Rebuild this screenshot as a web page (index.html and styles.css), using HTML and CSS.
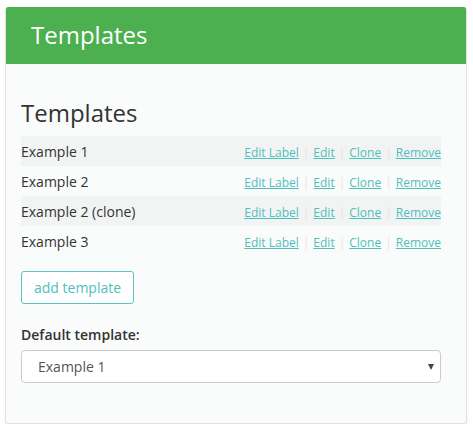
FILE: index.html
```html
<!DOCTYPE html>
<html>
<head>
<meta charset="utf-8">
<link rel="stylesheet" href="styles.css">
</head>
<body>
<div class="panel">
  <div class="panel-heading">Templates</div>
  <div class="panel-body">
    <h3 class="title">Templates</h3>
    <div class="rows">
      <div class="row striped"><span class="name">Example 1</span><span class="actions"><a href="#">Edit Label</a><span class="sep">|</span><a href="#">Edit</a><span class="sep">|</span><a href="#">Clone</a><span class="sep">|</span><a href="#">Remove</a></span></div>
      <div class="row"><span class="name">Example 2</span><span class="actions"><a href="#">Edit Label</a><span class="sep">|</span><a href="#">Edit</a><span class="sep">|</span><a href="#">Clone</a><span class="sep">|</span><a href="#">Remove</a></span></div>
      <div class="row striped"><span class="name">Example 2 (clone)</span><span class="actions"><a href="#">Edit Label</a><span class="sep">|</span><a href="#">Edit</a><span class="sep">|</span><a href="#">Clone</a><span class="sep">|</span><a href="#">Remove</a></span></div>
      <div class="row"><span class="name">Example 3</span><span class="actions"><a href="#">Edit Label</a><span class="sep">|</span><a href="#">Edit</a><span class="sep">|</span><a href="#">Clone</a><span class="sep">|</span><a href="#">Remove</a></span></div>
    </div>
    <button class="btn">add template</button>
    <label class="label">Default template:</label>
    <div class="select-wrap">
      <select class="select"><option>Example 1</option><option>Example 2</option><option>Example 2 (clone)</option><option>Example 3</option></select>
    </div>
  </div>
</div>
</body>
</html>
```
FILE: styles.css
```css
html, body {
  margin: 0;
  padding: 0;
  background: #ffffff;
  font-family: "Open Sans", "Liberation Sans", sans-serif;
  color: #333333;
}
.panel {
  margin: 7px 0 0 5px;
  width: 460px;
  border: 1px solid #dfe3e3;
  border-top: none;
  border-radius: 3px;
  background: #fafbfb;
  box-shadow: 0 1px 2px rgba(0,0,0,0.08);
  overflow: hidden;
}
.panel-heading {
  background: #4caf50;
  color: #ffffff;
  font-size: 24px;
  line-height: 26px;
  padding: 15px 25px 16px;
}
.panel-body {
  padding: 36px 25px 40px 15px;
}
.title {
  margin: 0 0 10px;
  font-size: 24px;
  font-weight: 400;
  line-height: 26px;
  color: #333333;
}
.rows {
  display: flex;
  flex-direction: column;
}
.row {
  display: flex;
  justify-content: space-between;
  align-items: center;
  height: 30px;
  font-size: 14px;
}
.row.striped {
  background: #f2f4f4;
}
.name {
  padding-left: 0;
}
.actions {
  font-size: 12px;
  display: flex;
  align-items: center;
  padding-top: 3px;
}
.actions a {
  color: #4fbfbc;
  text-decoration: underline;
}
.sep {
  color: #e3e6e6;
  margin: 0 4px;
}
.btn {
  margin-top: 15px;
  display: block;
  font-family: inherit;
  font-size: 14px;
  line-height: 19px;
  padding: 6px 12px;
  color: #4fbfbc;
  background: #ffffff;
  border: 1px solid #5cc3c0;
  border-radius: 3px;
}
.label {
  display: block;
  margin-top: 21px;
  margin-bottom: 5px;
  font-size: 14px;
  line-height: 20px;
  font-weight: 600;
  color: #333333;
}
.select-wrap {
  position: relative;
}
.select-wrap::after {
  content: "";
  position: absolute;
  right: 7px;
  top: 14px;
  border-left: 3.5px solid transparent;
  border-right: 3.5px solid transparent;
  border-top: 6px solid #444444;
}
.select {
  display: block;
  width: 100%;
  height: 33px;
  -webkit-appearance: none;
  appearance: none;
  font-family: inherit;
  font-size: 14px;
  color: #555555;
  padding: 0 16px;
  background: #ffffff;
  border: 1px solid #cccccc;
  border-radius: 4px;
}
```
